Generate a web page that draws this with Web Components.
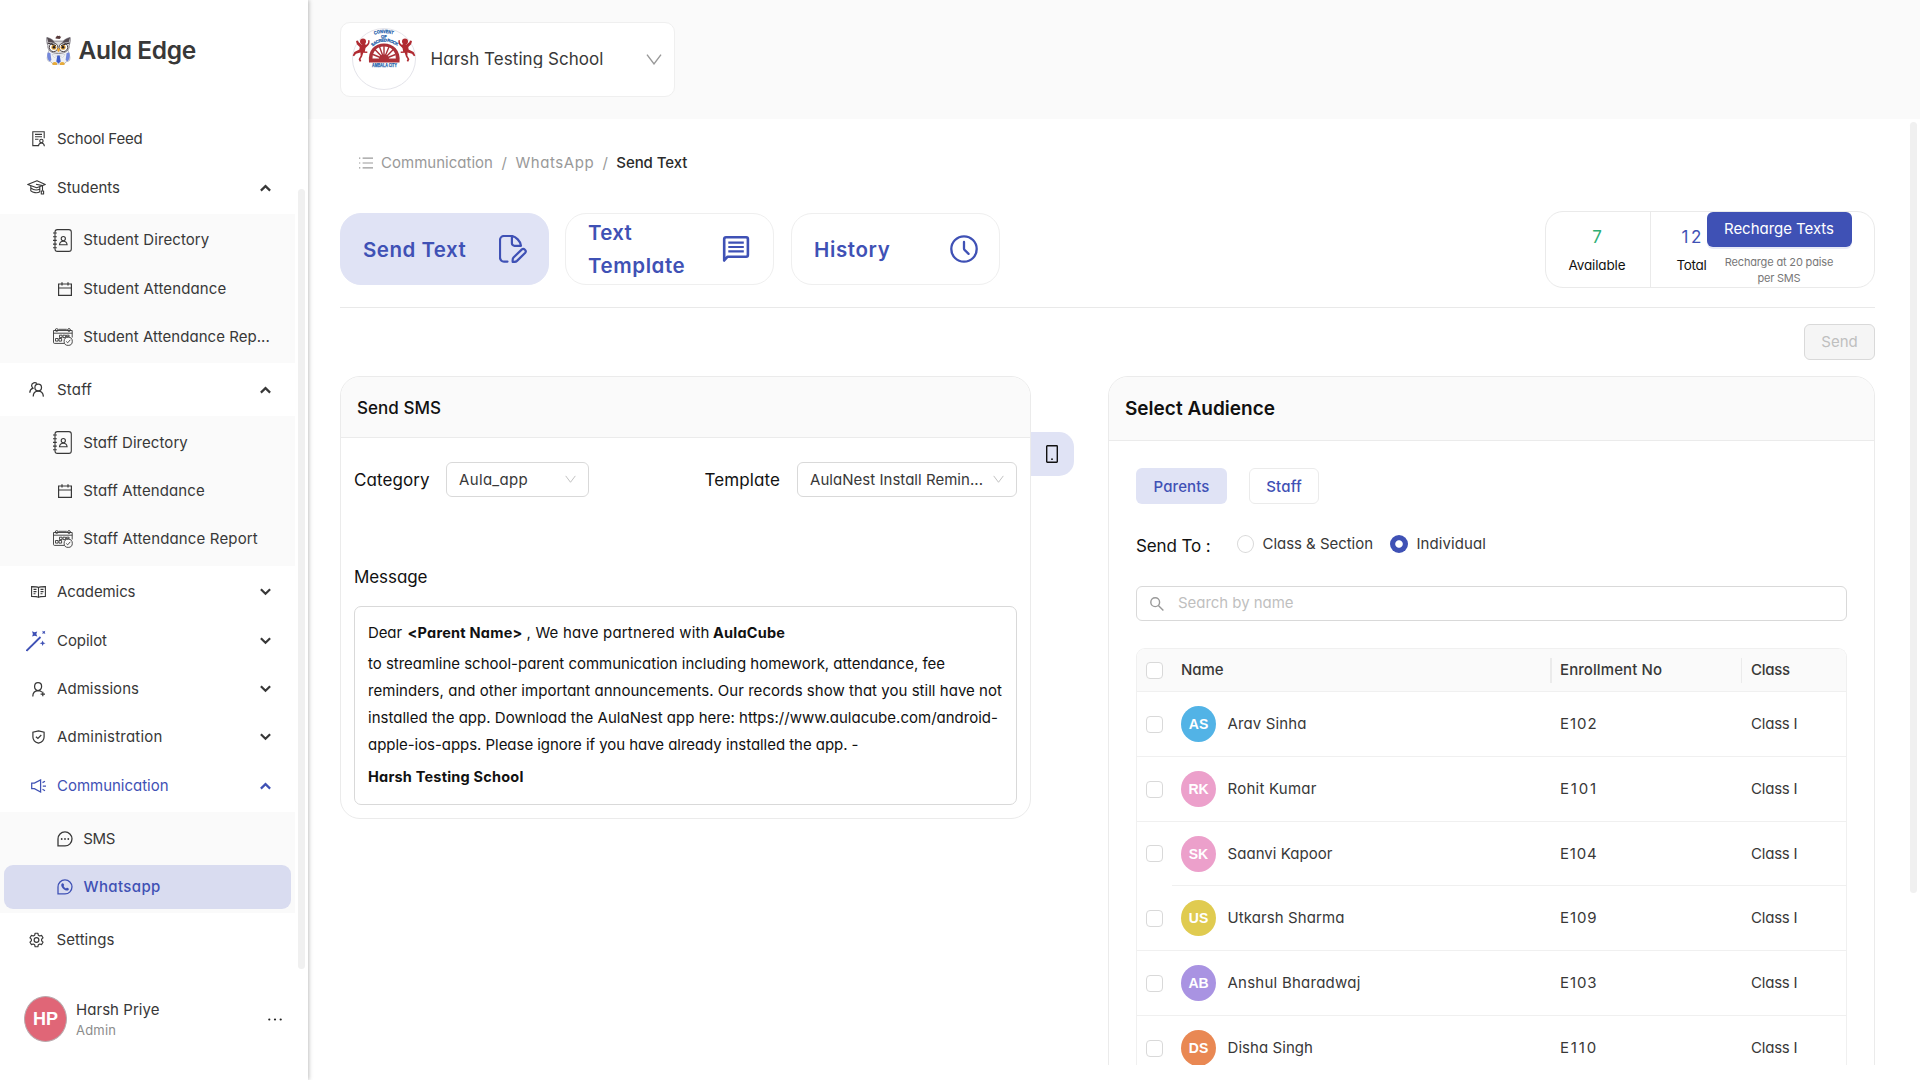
<!DOCTYPE html>
<html lang="en">
<head>
<meta charset="utf-8">
<title>Aula Edge</title>
<style>
html,body{margin:0;height:100%;overflow:hidden;background:#fff}
body{font-family:Inter,"Open Sans",sans-serif;font-feature-settings:"cv11";color:#383838;font-size:15px}
</style>
</head>
<body>
<aula-app></aula-app>
<script>
const define = (name, css, html, after) => customElements.define(name, class extends HTMLElement {
  connectedCallback() {
    if (this.shadowRoot) return;
    const root = this.attachShadow({ mode: 'open' });
    const a = n => this.getAttribute(n);
    root.innerHTML = `<style>*{box-sizing:border-box}${css}</style>` + (typeof html === 'function' ? html(a, this) : html);
    if (after) after(this, root, a);
  }
});

/* Text run: s = size, k = weight, c = colour, w = set width (tracked to fit) */
define('ui-text', `:host{display:block;flex:none;white-space:pre;line-height:20px;width:max-content}`, '<slot></slot>', (el, root, a) => {
  if (a('s')) el.style.fontSize = a('s') + 'px';
  if (a('k')) el.style.fontWeight = a('k');
  if (a('c')) el.style.color = a('c');
  if (a('w')) {
    const nat = el.getBoundingClientRect().width, n = el.textContent.length;
    if (nat) el.style.letterSpacing = ((+a('w') - nat) / (n - .5)).toFixed(3) + 'px';
    el.style.width = a('w') + 'px';
  }
});

/* name: [width, height, viewBox, markup] */
const S = 'fill="none" stroke="currentColor"';
const ICONS = {
  feed: [13, 16, '0 0 13 16', `<g ${S} stroke-width="1.1"><path d="M6 14.6H.8V.8h11.4v6.4M3 3.4h7M3 5.8h7M3 8.2h3.5"/><circle cx="9.4" cy="10" r="1.7"/><path d="M6.4 15.2c.2-2 1.2-3.2 3-3.2s2.800 1.200 3 3.200"/></g>`],
  cap: [19, 15, '0 0 19 15', `<g ${S} stroke-width="1.1" stroke-linejoin="round"><path d="M.7 4.600 10 .8l8.300 3.700-8.600 3.300zM3.800 6v4.800c2 1.700 6.200 2.800 9 1V6.500M9 4.200l6.500 1.400v5.200M3.800 8c2.200 1.700 5.700 2.700 9.200 1"/><path d="M14.300 11h2.300v3h-2.300z"/></g>`],
  directory: [19, 23, '0 0 19 23', `<g ${S} stroke-width="1.1"><rect x="2" y=".6" width="16.300" height="21.800" rx="2.400"/><path d="M0 4h3.800M0 7.700h3.800M0 11.400h3.800M0 15.100h3.800M0 18.800h3.800"/><circle cx="10.300" cy="9.600" r="2.100"/><path d="M6.500 15.700c.2-2.300 1.600-3.500 3.800-3.500s3.600 1.200 3.800 3.500z"/></g>`],
  calendar: [14, 14, '0 0 14 14', `<path ${S} stroke-width="1.200" d="M.6 2h12.800v11.400H.6zM.6 6h12.800M4 .2v3.300M10 .2v3.300"/>`],
  report: [20, 18, '0 0 20 18', `<g ${S} stroke-width=".9"><path d="M11 15.400H1.500a1 1 0 0 1-1-1V2.500h18.700v7M.5 5.200h18.700M5.500 1.300h8.300"/><circle cx="3.700" cy="2" r="1.400"/><circle cx="16" cy="2" r="1.400"/><path d="M2.500 10.500h2.600v2.600H2.500zM6 10.500h2.600v2.600H6zM6.500 7.200h2.600v2.400H6.500zM10 7.200h2.600v2.400H10zM13.500 7.200h2.600v1.500h-2.600z"/><circle cx="15.200" cy="13.300" r="4.100" fill="#fafafa"/><path d="m13.300 13.500 1.400 1.300 2.600-3"/></g>`],
  staff: [15, 15, '0 0 15 15', `<g ${S} stroke-width="1.250"><circle cx="9.200" cy="5.500" r="3.300"/><path d="M4.200 14.600c0-3.500 1.700-5.600 5-5.600s5 2 5.200 5.600M8 1.700C6.300-.2 2.700.6 2.600 3.600c0 1.300.7 2 1.400 2.600C1.900 7 .8 8.400.8 10.800"/></g>`],
  book: [15, 12, '0 0 15 12', `<path ${S} stroke-width="1.100" d="M7.500 1.500C6.500.8 5.300.6.600.6v9.800c4.700 0 5.900.2 6.900 1 1-.8 2.200-1 6.900-1V.6c-4.700 0-5.900.2-6.900.9v9.900M2.500 3.400h3M2.500 5.600h3M2.500 7.700h2M9.500 3.400h3M9.500 5.600h3M9.500 7.700h2"/>`],
  wand: [20, 22, '0 0 20 22', `<path stroke="#3f51b5" stroke-width="1.800" d="M.5 20.800 14.500 7"/><g fill="#3f51b5"><path d="m6 1.300 2.500.9 2.700-.6-.9 2.400 1 2.400-2.600-.7-2.600.9.800-2.600zM16.300.8l1.500.6 1.500-.6-.5 1.500.5 1.600-1.500-.6-1.500.6.500-1.600zM16.600 10.500l.9 2 2 .8-2 .8-.9 2-.8-2-2.200-.8 2.200-.8z"/></g>`],
  admission: [14, 15, '0 0 14 15', `<g ${S} stroke-width="1.250"><path d="M.8 14.600c0-3.600 2-5.700 5.200-5.900 5-1.200 4.600-8 0-8C1.600.7 1.400 7.800 5.800 8.600c2 0 3.200.5 4.200 1.600M10.800 9.800v4.400M8.600 12h4.400"/></g>`],
  shield: [13, 14, '0 0 13 14', `<g ${S} stroke-width="1.200"><path d="m6.500.8 5.600 1.400v4.700c0 3-2.300 5.200-5.600 6.200C3.200 12.100.9 9.900.9 6.900V2.200z"/><path d="m3.900 6.700 2 1.800 3.400-3.500"/></g>`],
  speaker: [15, 14, '0 0 15 14', `<path ${S} stroke-width="1.250" d="M.7 4.100v5.600h2.700L9.600 13V.9L3.400 4.100zM11.800 7H15M11.500 3.600 14 2.200M11.500 10.300l2.500 1.400"/>`],
  sms: [16, 16, '0 0 16 16', `<path ${S} stroke-width="1.300" d="M1 14.900V8a7 7 0 1 1 7 6.900z"/><g fill="currentColor"><circle cx="4.700" cy="8" r=".9"/><circle cx="8" cy="8" r=".9"/><circle cx="11.300" cy="8" r=".9"/></g>`],
  whatsapp: [16, 16, '0 0 16 16', `<path ${S} stroke-width="1.300" d="M1 14.900V8a7 7 0 1 1 7 6.900z"/><path fill="currentColor" d="M5.500 4.200c.8-.3 1.200.7 1.600 1.600.2.600-.5 1-.5 1.300.6 1.100 1.300 1.800 2.400 2.300.4 0 .7-.8 1.300-.6 1 .5 1.800.8 1.500 1.600-.6 1.300-2 1.500-3.500.8C6.100 10.100 4.300 8 4.200 6.300c0-1 .5-1.800 1.300-2.100z"/>`],
  gear: [15, 16, '0 0 24 24', `<g ${S} stroke-width="1.900"><circle cx="12" cy="12" r="3.800"/><path stroke-linejoin="round" d="M9.800 1.200h4.400l.7 3.100 2.300 1.300 3-.9 2.200 3.800-2.200 2.200v2.600l2.200 2.200-2.200 3.800-3-.9-2.300 1.300-.7 3.100H9.800l-.7-3.100-2.300-1.300-3 .9-2.200-3.800 2.200-2.200v-2.600L1.600 8.500l2.200-3.800 3 .9 2.300-1.300z"/></g>`],
  down: [10, 7, '0 0 10 7', `<path ${S} stroke-width="2" d="m.8 1 4.200 4.100L9.200 1"/>`],
  up: [10, 7, '0 0 10 7', `<path ${S} stroke-width="2" d="m.8 5.900 4.200-4.100 4.200 4.100"/>`],
  vee: [16, 11, '0 0 16 11', `<path ${S} stroke-width="1.400" d="m1 .6 7 9.300L15 .6"/>`],
  dots: [14, 3, '0 0 14 3', `<g fill="#222"><circle cx="1.300" cy="1.500" r="1.100"/><circle cx="7" cy="1.500" r="1.100"/><circle cx="12.700" cy="1.500" r="1.100"/></g>`],
  list: [14, 12, '0 0 14 12', `<path ${S} stroke-width="1.150" d="M3.600 1.100H14M3.600 6H14M3.600 10.900H14M0 1.100h1.300M0 6h1.300M0 10.900h1.300"/>`],
  edit: [28, 28, '0 0 28 28', `<g ${S} stroke-width="2.200" stroke-linejoin="round" stroke-linecap="round"><path d="M8.500 26.600H5a4 4 0 0 1-4-4V5a4 4 0 0 1 4-4h7.500c4 0 9.500 5.700 9.500 9.800h-6.500a2.600 2.600 0 0 1-2.600-2.600V1.200"/><path d="m14.500 22.500 8.400-8.100c1.900-1.500 5 1.200 3.400 3.300L18 25.900c-1.200 1.100-2.600 1.200-4.300.9-.2-1.700-.1-3.300.8-4.300z"/></g>`],
  message: [28, 28, '0 0 28 28', `<path ${S} stroke-width="2.600" stroke-linejoin="round" d="M2.200 25.500V4q0-1.700 1.800-1.700h20.200q1.700 0 1.700 1.700v16q0 1.700-1.700 1.700H5.600z"/><path ${S} stroke-width="2.200" d="M6.300 7.600h15.500M6.300 12h15.500M6.300 16.400h15.500"/>`],
  clock: [28, 28, '0 0 28 28', `<g ${S} stroke-width="2.300" stroke-linecap="round"><circle cx="14" cy="14" r="12.700"/><path d="M14 7v6.500q0 1 .8 1.700l3.800 3.700"/></g>`],
  phone: [12, 18, '0 0 12 18', `<rect ${S} stroke-width="1.400" x=".7" y=".8" width="10.600" height="16.400" rx=".6"/><circle cx="6" cy="14.200" r=".9" fill="currentColor"/>`],
  search: [14, 14, '0 0 14 14', `<g ${S} stroke-width="1.400"><circle cx="5.200" cy="5.200" r="4.400"/><path d="m8.400 8.400 5 5"/></g>`]
};
define('ui-icon', `:host{display:block;flex:none}svg{display:block;width:100%;height:100%}`, a => {
  const i = ICONS[a('name')];
  return `<style>:host{width:${a('w') || i[0]}px;height:${a('h') || i[1]}px}</style><svg viewBox="${i[2]}">${i[3]}</svg>`;
});

define('ui-avatar', `:host{display:flex;align-items:center;justify-content:center;flex:none;width:35px;height:36px;border-radius:50%;color:#fff;font:700 14px/1 "Liberation Sans",sans-serif;background:var(--bg)}`, '<slot></slot>');

define('owl-mark', `:host{display:block;width:25px;height:31px;flex:none}svg{display:block}`, `
<svg width="25" height="31" viewBox="0 0 25 31">
<path d="M3 15h19l1.800 7c.3 3-1 5-2.800 4.200L18 29H7l-3-2.800c-2 .6-3-1.500-2.700-4.200z" fill="#eef0f4" stroke="#a9abb3" stroke-width=".8"/>
<path d="M1.600 17.500c-.8 3-.3 7 2 9l1.800-1.500-1-7zM23.400 17.500c.8 3 .3 7-2 9L19.600 25l1-7z" fill="#7287dc"/>
<path d="M.8 2.500c3 .6 5 1.700 7 3.600h9.400c2-1.900 4-3 7-3.600.4 3.300-.4 6-1 8 .4 4-2.800 8-10.700 8S1.400 14.500 1.800 10.500C1 8.500.4 5.500.8 2.500z" fill="#dcdbdd" stroke="#77747c" stroke-width=".8"/>
<path d="M.9 2.500c3.200.6 6 2.500 8 5.300L2.300 7.300zM24.100 2.500c-3.200.6-6 2.500-8 5.300l6.600-.5z" fill="#544a50"/>
<path d="M9.500 3.500c.2-2 1.500-2.500 2.200-3 .3.900 1.300.3 2-.1-.2 1 .9 1 1.800 1.400-.8.300-.9 1.500-2 2.300z" fill="#5a3c3c"/>
<g fill="#fff" stroke="#4b4448" stroke-width="1"><circle cx="7.600" cy="12.300" r="4.300"/><circle cx="17.400" cy="12.300" r="4.300"/></g>
<g fill="#d79a35"><circle cx="7.900" cy="12.300" r="2.500"/><circle cx="17.100" cy="12.300" r="2.500"/></g><g fill="#211c20"><circle cx="8" cy="12.300" r="1.300"/><circle cx="17" cy="12.300" r="1.300"/></g>
<path d="m1.500 8 8.500 2.500M23.500 8 15 10.500" stroke="#30292e" stroke-width="1.200"/>
<path d="m12.500 12.500 1.700 2.300-1.700 2.400-1.700-2.400z" fill="#eda52d"/>
<path d="M6 19.300c3 1.500 10 1.500 13 0l-2 3-4.500-1.500L8 22.300z" fill="#fff" stroke="#b3b8c8" stroke-width=".5"/>
<path d="m11.300 20.500 2.400 0 1 6-2.200 2-2.200-2z" fill="#3d5cc9"/>
<path d="M6.500 28c1-1.300 3.500-1.300 4.500 0v2H6.500zM14 28c1-1.300 3.500-1.300 4.500 0v2H14z" fill="#e6ab3c"/>
</svg>`);

const cherub = `<circle cx="11" cy="13.500" r="3" /><path d="M4 13.500c1-1.500 2-1 2.500.5l3 2.500c2-1.500 4-.5 4.500.5l2-2 .3-3 1.200.3c.4 2-.2 4-1.200 5L13.500 20l-.7 3.500 2.500 0v1.500l-4-.2-1.300 4-1.500 2.300.8 2-1.500.6-1.200-2.400 2-3.500-.1-3.300-4.500 1.200-2 2.500-1.300-.7 1.700-3.500 5-2.500.3-2.400-2.600-2.600z"/>`;
define('school-crest', `:host{display:block;flex:none;width:64px;height:62px}svg{display:block}text{font:700 4.700px "Liberation Sans",sans-serif;fill:#1f62ac;stroke:#1f62ac;stroke-width:.25px}`, `
<svg width="64" height="62" viewBox="0 0 64 62">
<ellipse cx="32" cy="31" rx="31.500" ry="30.500" fill="#fff" stroke="#e4e4ea"/>
<defs><path id="a1" d="M22.500 6.800Q32 3 42 6.800"/><path id="a2" d="M20.500 18.500Q32 8.500 46 18.500"/></defs>
<text textLength="19" lengthAdjust="spacingAndGlyphs"><textPath href="#a1">CONVENT</textPath></text>
<text x="29" y="9.500" style="font-size:4.200px">OF</text>
<text style="font-size:4.200px"><textPath href="#a2" textLength="27">SACRED ROCK</textPath></text>
<path d="M17 34.500C15.500 22 23 15.500 32 15.500S49 22 47.500 34.500z" fill="#ab3038"/>
<path d="M20.500 30.500C20.500 23 25 18.500 32 18.500s11.800 4.500 11.800 12z" fill="#fff"/>
<path d="M32 31V18M32 31 27.500 18.700M32 31l5-12.300M32 31l-9-9.500M32 31l9.300-9.500M32 31l-11-4.500M32 31l11.500-4.500" stroke="#ab3038" stroke-width="1.400"/>
<path d="M27 31a5 4.500 0 0 1 10 0z" fill="#ab3038"/>
<g fill="#b02a31">${cherub}<g transform="translate(64 0) scale(-1 1)">${cherub}</g></g>
<text x="20" y="38.700" textLength="25" lengthAdjust="spacingAndGlyphs" style="font-size:4.600px">AMBALA CITY</text>
</svg>`);

/* Sidebar row: x = icon left edge, h = row height */
define('nav-item', `
:host{display:flex;align-items:center;flex:none;color:#383838}
:host([active]){color:#3f51b5}
.ic{flex:none;display:flex}
.end{margin-left:auto;padding-right:24px}
`, a => `<style>:host{height:${a('h')}px}.ic{width:${a('tx') || 57}px;padding-left:${a('x')}px}</style>
<div class="ic"><ui-icon name="${a('icon')}"></ui-icon></div><ui-text w="${a('w')}"><slot></slot></ui-text>
${a('arrow') ? `<div class="end"><ui-icon name="${a('arrow')}" w="11" h="8"></ui-icon></div>` : ''}`, (el, root, a) => {
  const t = root.querySelector('ui-text');
  t.style.letterSpacing = '0';
  t.style.width = 'max-content';
  const nat = t.getBoundingClientRect().width;
  t.style.letterSpacing = ((+a('w') - nat) / (el.textContent.length - .5)).toFixed(3) + 'px';
});
define('nav-sub', `:host{display:block;flex:none;background:#fafafa;width:295px}`, '<slot></slot>');

define('aula-sidebar', `
:host{display:flex;flex-direction:column;width:308px;height:1080px;background:#fff;box-shadow:1px 0 4px rgba(0,0,0,.25);position:relative;z-index:2}
.brand{display:flex;align-items:center;height:100px;padding-left:45.500px;gap:8px;flex:none}
.mid{display:flex;flex:none;height:855px;margin-top:14px}
nav{width:295px;display:flex;flex-direction:column}
.bar{width:7px;height:780px;margin:75px 0 0 3px;background:#f0f0f0;border-radius:4px}
.sel{margin:0 4px;height:44px;border-radius:9px;background:#d9dcf0;display:flex;align-items:center}
.user{display:flex;align-items:center;padding:0 26.500px 0 24px;height:46px;margin-top:27px}
.user ui-avatar{width:43px;height:46px;border:1px solid #b9a9ad;--bg:#e06677;font-size:18px}
.nm{margin-left:9px;margin-top:2px;flex:1}
`, `
<div class="brand"><owl-mark></owl-mark><ui-text s="24.500" k="600" w="117.500">Aula Edge</ui-text></div>
<div class="mid"><nav>
<nav-item icon="feed" x="32" h="49" w="85.500">School Feed</nav-item>
<nav-item icon="cap" x="27" h="49" style="margin-bottom:2px" w="63" arrow="up">Students</nav-item>
<nav-sub style="height:148.500px;padding-top:2px">
<nav-item icon="directory" x="53" tx="83.300" h="48.500" w="126">Student Directory</nav-item>
<nav-item icon="calendar" x="58" tx="83.300" h="48.500" w="143">Student Attendance</nav-item>
<nav-item icon="report" x="53" tx="83.300" h="48.500" w="186.500">Student Attendance Rep...</nav-item></nav-sub>
<nav-item icon="staff" x="29" h="52.500" style="margin-top:1px" w="35" arrow="up">Staff</nav-item>
<nav-sub style="height:149.500px;padding-top:2.500px">
<nav-item icon="directory" x="53" tx="83.300" h="48" w="104.500">Staff Directory</nav-item>
<nav-item icon="calendar" x="58" tx="83.300" h="48" w="121.500">Staff Attendance</nav-item>
<nav-item icon="report" x="53" tx="83.300" h="48" w="174.500">Staff Attendance Report</nav-item></nav-sub>
<nav-item icon="book" x="31" h="50" style="margin-top:1.500px" w="78.500" arrow="down">Academics</nav-item>
<nav-item icon="wand" x="26" h="48" w="50" arrow="down">Copilot</nav-item>
<nav-item icon="admission" x="32" h="48" w="82" arrow="down">Admissions</nav-item>
<nav-item icon="shield" x="32" h="48.500" w="105.500" arrow="down">Administration</nav-item>
<nav-item icon="speaker" x="31" h="48" style="margin-bottom:2px" w="111.500" arrow="up" active>Communication</nav-item>
<nav-sub style="height:101px;padding-top:3px">
<nav-item icon="sms" x="57" tx="83.300" h="48" style="margin-bottom:2px" w="32">SMS</nav-item>
<div class="sel"><nav-item icon="whatsapp" x="53" tx="79.500" h="44" w="77" active style="font-weight:500">Whatsapp</nav-item></div></nav-sub>
<nav-item icon="gear" x="29" h="54" tx="56.500" w="58">Settings</nav-item>
</nav><div class="bar"></div></div>
<div class="user"><ui-avatar>HP</ui-avatar><div class="nm"><ui-text w="83.500">Harsh Priye</ui-text><ui-text s="13" c="#8c8c8c" w="40">Admin</ui-text></div><ui-icon name="dots"></ui-icon></div>`);

define('school-bar', `
:host{display:flex;height:119px;background:#fafafa;padding:22px 0 0 32px}
.box{display:flex;align-items:center;width:335px;height:75px;background:#fff;border:1px solid #efefef;border-radius:10px;padding-left:11px}
school-crest{margin-top:-1px}
.t{margin:-3px 0 0 14.500px;height:19px;overflow:hidden}
ui-icon{margin:-1px 12.500px 0 auto;color:#999}
`, `<div class="box"><school-crest></school-crest><div class="t"><ui-text s="17" w="173">Harsh Testing School</ui-text></div><ui-icon name="vee"></ui-icon></div>`);

define('bread-crumbs', `:host{display:flex;align-items:center;height:20px;color:#999;gap:8.500px}`, `
<ui-icon name="list"></ui-icon><ui-text w="112">Communication</ui-text><ui-text>/</ui-text><ui-text w="78.500">WhatsApp</ui-text><ui-text>/</ui-text><ui-text k="500" c="#2b2b2b" w="71">Send Text</ui-text>`);

define('mode-tab', `
:host{display:flex;align-items:center;justify-content:space-between;width:209px;height:72px;border:1px solid #efefef;border-radius:21px;padding:0 21.500px 0 22px;color:#3f51b5}
:host([on]){background:#e0e3f5;border-color:#e0e3f5}
.l ::slotted(ui-text){line-height:33px}
`, a => `<div class="l"><slot></slot></div><ui-icon name="${a('icon')}"></ui-icon>`);

define('quota-box', `
:host{display:flex;width:330px;height:77px;border:1px solid #eaeaea;border-radius:18px;background:#fff}
.c{display:flex;flex-direction:column;align-items:center;gap:8px;padding-top:15px}
.a{width:105px;border-right:1px solid #eaeaea;padding-right:2px}.b{width:55.500px;align-items:flex-end}
.r{display:flex;flex-direction:column;align-items:center;width:145px}
.btn{display:flex;align-items:center;justify-content:center;width:145px;height:35px;background:#3f51b5;border-radius:6px;box-shadow:0 2px 0 rgba(63,81,181,.12);margin-bottom:7px}
.btn ui-text{margin-top:-2px}
.r>ui-text{line-height:16px}
`, `<div class="c a"><ui-text s="17" c="#2fae74">7</ui-text><ui-text s="13.500" c="#111" w="57">Available</ui-text></div>
<div class="c b"><ui-text s="17" c="#3f51b5" w="21" style="margin-right:4px">12</ui-text><ui-text s="13.500" c="#111" w="30">Total</ui-text></div>
<div class="r"><div class="btn"><ui-text c="#fff" w="110">Recharge Texts</ui-text></div><ui-text s="11" c="#777" w="108.500">Recharge at 20 paise</ui-text><ui-text s="11" c="#777" w="43">per SMS</ui-text></div>`);

define('ui-select', `:host{display:flex;align-items:center;justify-content:space-between;height:35px;border:1px solid #d9d9d9;border-radius:6px;padding:0 12.500px 0 12px;background:#fff;flex:none}ui-icon{color:#bfbfbf}`, a => `<slot></slot><ui-icon name="vee" w="11" h="8.500"></ui-icon>`);

define('panel-card', `
:host{display:block;border:1px solid #ebebeb;border-radius:20px;overflow:hidden;background:#fff;flex:none}
header{background:#fafafa;border-bottom:1px solid #ebebeb;display:flex;align-items:center;padding:1.500px 0 0 16px;height:var(--head)}
`, `<header><slot name="title"></slot></header><slot></slot>`);

define('sms-composer', `
:host{display:flex;align-items:flex-start}
panel-card{width:691px;height:443px;--head:61px}
.body{padding:24px 13px 0 13px}
.f{display:flex;align-items:center;height:35px}
.lab{margin:69.500px 0 19.500px}
.msg{border:1px solid #d9d9d9;border-radius:7px;height:199px;padding:15.500px 0 0 13px}
.l1{display:flex}.l1 ui-text{line-height:20px}
.p{margin-top:7px}.p ui-text{line-height:27px}
.last{margin-top:9px}
.tab{display:flex;align-items:center;justify-content:center;width:43px;height:44px;margin:56px 0 0 0;background:#e0e3f5;border-radius:0 15px 15px 0;color:#111;padding-right:1px}
`, `<panel-card><ui-text slot="title" s="17" k="500" c="#111" w="84">Send SMS</ui-text>
<div class="body"><div class="f"><ui-text s="17" c="#111" w="75.500">Category</ui-text><ui-select style="width:143px;margin-left:16.500px"><ui-text w="69">Aula_app</ui-text></ui-select>
<ui-text s="17" c="#111" w="75.500" style="margin-left:115.500px">Template</ui-text><ui-select style="width:220px;margin-left:auto"><ui-text w="173">AulaNest Install Remin...</ui-text></ui-select></div>
<ui-text class="lab" s="17" c="#111" w="73.500">Message</ui-text>
<div class="msg" style="color:#111"><div class="l1"><ui-text w="34">Dear</ui-text><ui-text k="700" w="115" s="14.500" style="margin-left:5.500px">&lt;Parent Name&gt;</ui-text><ui-text w="183" style="margin-left:4px">, We have partnered with</ui-text><ui-text k="700" w="72" s="14.500" style="margin-left:3.500px">AulaCube</ui-text></div>
<div class="p"><ui-text w="577">to streamline school-parent communication including homework, attendance, fee</ui-text><ui-text w="634">reminders, and other important announcements. Our records show that you still have not</ui-text><ui-text w="630">installed the app. Download the AulaNest app here: https://www.aulacube.com/android-</ui-text><ui-text w="490.500">apple-ios-apps. Please ignore if you have already installed the app. -</ui-text></div>
<ui-text class="last" k="700" s="14.500" w="155.500">Harsh Testing School</ui-text></div></div></panel-card>
<div class="tab"><ui-icon name="phone"></ui-icon></div>`);

define('check-box', `:host{display:block;width:17px;height:17px;border:1px solid #d9d9d9;border-radius:4px;background:#fff;flex:none}`, '');
define('radio-dot', `:host{display:block;width:17px;height:18px;border:1px solid #d9d9d9;border-radius:50%;background:#fff;flex:none}:host([on]){width:18px;border:0;background:radial-gradient(circle,#fff 3.300px,#3f51b5 4.200px)}`, '');

define('student-table', `
:host{display:block;width:711px;border:1px solid #f0f0f0;border-bottom:0;border-radius:9px 9px 0 0;overflow:hidden;margin-top:27px}
.row{display:grid;grid-template-columns:35px 379px 191px 1fr;height:65px}
.row.s{height:64px}
.row>div{display:flex;align-items:center;border-bottom:1px solid #f0f0f0;padding-left:9px}
.row>div:nth-child(2){gap:11.500px}
.head{height:43px;background:#fafafa}
.head i{width:1px;height:25px;background:#ebebeb;margin-left:-10px;margin-right:9px}
.head i.w{width:2px;margin-right:8px}
`, () => {
  const rows = [['AS','#52b3e6','Arav Sinha',79,'E102'],['RK','#eca0cb','Rohit Kumar',89,'E101'],['SK','#eca0cb','Saanvi Kapoor',105,'E104'],['US','#e0cb50','Utkarsh Sharma',117,'E109'],['AB','#a993e2','Anshul Bharadwaj',133,'E103'],['DS','#e98853','Disha Singh',85.500,'E110']];
  return `<div class="row head"><div><check-box></check-box></div><div><ui-text k="500" w="42.500">Name</ui-text></div><div><i class="w"></i><ui-text k="500" w="102">Enrollment No</ui-text></div><div><i></i><ui-text k="500" w="39">Class</ui-text></div></div>` +
  rows.map((r, i) => `<div class="row${i === 2 ? ' s' : ''}"><div${i === 2 ? ' style="border-color:transparent"' : ''}><check-box></check-box></div><div><ui-avatar style="--bg:${r[1]}">${r[0]}</ui-avatar><ui-text w="${r[3]}">${r[2]}</ui-text></div><div><ui-text w="37">${r[4]}</ui-text></div><div><ui-text w="46.500">Class I</ui-text></div></div>`).join('');
});

define('audience-panel', `
:host{display:block;flex:none}
panel-card{width:767px;height:760px;--head:64px}
.body{padding:27px 0 0 27px}
.b{display:flex;gap:22px}
.b div{display:flex;align-items:center;justify-content:center;height:36px;border-radius:6px;color:#3f51b5;font-weight:500;padding-top:1px}
.on{width:91px;background:#e0e3f5}.off{width:70px;border:1px solid #ebebeb}
.to{display:flex;align-items:center;height:20px;margin-top:30px}
.search{display:flex;align-items:center;gap:14px;width:711px;height:35px;border:1px solid #d9d9d9;border-radius:6px;margin-top:32px;padding-left:13px;color:#999}
.search ui-text{margin-top:-1px}
`, `<panel-card><ui-text slot="title" s="19" k="600" c="#111" w="150">Select Audience</ui-text>
<div class="body"><div class="b"><div class="on"><ui-text w="56">Parents</ui-text></div><div class="off"><ui-text w="35.500">Staff</ui-text></div></div>
<div class="to"><ui-text s="17" c="#111" w="74.500" style="margin-top:4px">Send To :</ui-text><radio-dot style="margin-left:26px"></radio-dot><ui-text w="110.500" style="margin-left:9px">Class &amp; Section</ui-text><radio-dot on style="margin-left:17px"></radio-dot><ui-text w="69.500" style="margin-left:8.500px">Individual</ui-text></div>
<div class="search"><ui-icon name="search"></ui-icon><ui-text c="#bfbfbf" w="115.500">Search by name</ui-text></div>
<student-table></student-table></div></panel-card>`);

define('aula-app', `
:host{display:flex;width:1920px;height:1080px;overflow:hidden;background:#fff}
.main{flex:1;width:1612px;display:flex;flex-direction:column}
.view{display:flex;height:946px;overflow:hidden}
.page{width:1535px;margin-left:32px;padding-top:33px;flex:none}
bread-crumbs{margin:0 0 0 18.500px;padding-top:1px}
.tabs{display:flex;align-items:flex-start;height:97px;margin-top:39px;border-bottom:1px solid #e9e9e9}
.tabs mode-tab{margin:2px 16px 0 0}
quota-box{margin-left:auto}
.act{display:flex;justify-content:flex-end;padding-top:16px;height:68px}
.send{display:flex;align-items:center;justify-content:center;width:71px;height:36px;border:1px solid #d9d9d9;border-radius:6px;background:#f5f5f5}
.cols{display:flex;justify-content:space-between}
.bar{width:7px;height:771px;background:#f0f0f0;border-radius:4px;margin:3px 0 0 35px}
`, `<aula-sidebar></aula-sidebar><div class="main"><school-bar></school-bar><div class="view"><div class="page">
<bread-crumbs></bread-crumbs>
<div class="tabs"><mode-tab icon="edit" on><ui-text s="20.500" k="600" w="103">Send Text</ui-text></mode-tab><mode-tab icon="message" style="padding-right:23px;margin-right:17px"><ui-text s="20.500" k="600" w="44">Text</ui-text><ui-text s="20.500" k="600" w="97">Template</ui-text></mode-tab><mode-tab icon="clock"><ui-text s="20.500" k="600" w="76">History</ui-text></mode-tab><quota-box></quota-box></div>
<div class="act"><div class="send"><ui-text c="#bfbfbf" w="36.500">Send</ui-text></div></div>
<div class="cols"><sms-composer></sms-composer><audience-panel></audience-panel></div>
</div><div class="bar"></div></div></div>`);
</script>
</body>
</html>
